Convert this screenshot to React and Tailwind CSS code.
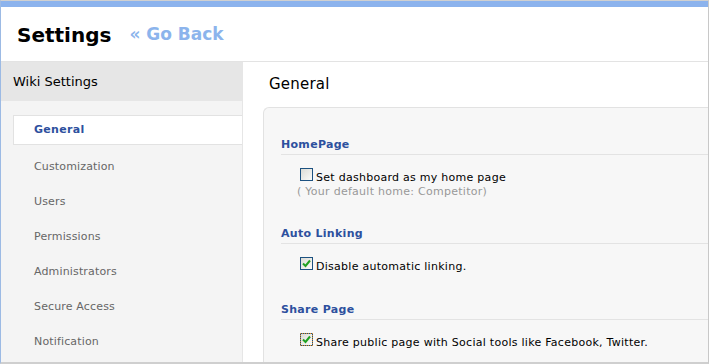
import React from 'react'

const navItems = ['Customization', 'Users', 'Permissions', 'Administrators', 'Secure Access', 'Notification']

const font = { fontFamily: '"DejaVu Sans", Verdana, sans-serif' }

const Check = ({ checked, focus }) => (
  <span
    className={`inline-flex h-[13px] w-[13px] shrink-0 items-center justify-center border border-[#1c5180] bg-gradient-to-br from-[#dcdcd6] to-[#fbfbf9] ${focus ? 'outline-1 -outline-offset-1 outline-dotted outline-[#e0902c]' : ''}`}
  >
    {checked && (
      <svg width="9" height="9" viewBox="0 0 9 9">
        <path d="M1 4.5 L3.5 7 L8 1.5" fill="none" stroke="#21a121" strokeWidth="2" />
      </svg>
    )}
  </span>
)

const Section = ({ title, children, className = '' }) => (
  <div className={className}>
    <div className="h-[17px] border-b border-[#e3e3e3] text-[11px] font-bold leading-[14px] tracking-[0.3px] text-[#2d509e]">
      {title}
    </div>
    {children}
  </div>
)

const Option = ({ label, checked, focus }) => (
  <div className="mt-[13px] ml-[19px] flex items-start gap-[3px] text-[11px] leading-[14px] tracking-[0.27px] text-black">
    <Check checked={checked} focus={focus} />
    <span className="mt-[3px]">{label}</span>
  </div>
)

export default function App() {
  return (
    <div style={font} className="h-[364px] w-[709px] overflow-hidden border-t border-r border-b-2 border-l border-t-[#d0d0d0] border-r-[#c8c8c8] border-b-[#cfcfcf] border-l-[#9cbae4] bg-white">
      <div className="h-[6px] bg-[#8cb3ed]" />
      {/* header */}
      <div className="flex h-[55px] items-center gap-[18px] border-b border-[#e3e3e3] pl-[16px]">
        <h1 className="pt-[1px] text-[20px] font-bold text-black">Settings</h1>
        <a className="pt-[1px] text-[17px] font-bold text-[#8cb4ec]">« Go Back</a>
      </div>

      <div className="flex h-[302px]">
        {/* sidebar */}
        <div className="w-[242px] shrink-0 border-r border-[#e6e6e6] bg-[#f4f4f4]">
          <div className="flex h-[39px] items-center bg-[#e6e6e6] pl-[12px] text-[13px] text-black">
            Wiki Settings
          </div>
          <div className="pt-[14px]">
            <div className="ml-[12px] flex h-[30px] items-center border-t border-b border-l border-[#e2e2e2] bg-white pl-[20px] text-[11px] font-bold tracking-[0.3px] text-[#2d509e]">
              General
            </div>
            <div className="mt-[5px]">
              {navItems.map((item) => (
                <div key={item} className="flex h-[35px] items-center pl-[33px] text-[11px] tracking-[0.15px] text-[#666666]">
                  {item}
                </div>
              ))}
            </div>
          </div>
        </div>

        {/* content */}
        <div className="flex-1 bg-white">
          <div className="flex h-[45px] items-center pl-[26px] text-[15px] tracking-[0.2px] text-black">General</div>
          <div className="ml-[20px] h-full rounded-tl-[6px] border-t border-l border-[#e2e2e2] bg-[#f7f7f7] pt-[30px] pl-[17px]">
            <Section title="HomePage">
              <Option label="Set dashboard as my home page" />
              <div className="ml-[16px] text-[11px] leading-[14px] tracking-[0.27px] text-[#999999]">( Your default home: Competitor)</div>
            </Section>
            <Section title="Auto Linking" className="mt-[28px]">
              <Option label="Disable automatic linking." checked />
            </Section>
            <Section title="Share Page" className="mt-[29px]">
              <Option label="Share public page with Social tools like Facebook, Twitter." checked focus />
            </Section>
          </div>
        </div>
      </div>
    </div>
  )
}
